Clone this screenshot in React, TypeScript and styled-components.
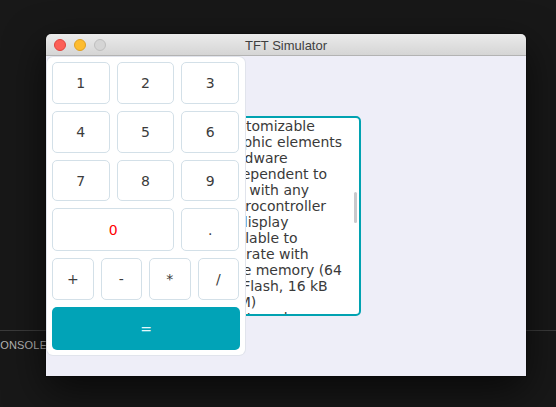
import React from "react";
import styled, { createGlobalStyle } from "styled-components";

const GlobalStyle = createGlobalStyle`
  html, body {
    margin: 0;
    padding: 0;
    background: #181818;
    overflow: hidden;
  }
  * { box-sizing: border-box; }
`;

const Desktop = styled.div`
  position: relative;
  width: 556px;
  height: 407px;
  background: #181818;
  padding-top: 330px;
  overflow: hidden;
`;

const IdePanel = styled.div`
  border-top: 1px solid #3b3b3b;
  padding-top: 8px;
  display: flex;
`;

const PanelTab = styled.span`
  margin-left: -8px;
  font-family: "Liberation Sans", Arial, sans-serif;
  font-size: 11px;
  line-height: 13px;
  color: #b4b4b4;
  letter-spacing: 0.2px;
`;

const Window = styled.div`
  position: absolute;
  left: 46px;
  top: 34px;
  width: 480px;
  display: flex;
  flex-direction: column;
  box-shadow: 0 14px 40px rgba(0, 0, 0, 0.65), 0 0 0 1px rgba(0, 0, 0, 0.25);
  border-radius: 5px 5px 0 0;
`;

const TitleBar = styled.div`
  height: 22px;
  display: grid;
  grid-template-columns: 1fr auto 1fr;
  align-items: center;
  background: linear-gradient(#ebebeb, #d5d5d5);
  border-bottom: 1px solid #b3b3b3;
  border-radius: 5px 5px 0 0;
  padding: 0 8px;
`;

const Lights = styled.div`
  display: flex;
  gap: 8px;
  align-items: center;
`;

const Light = styled.span<{ $bg: string; $border: string }>`
  width: 12px;
  height: 12px;
  border-radius: 50%;
  background: ${(p) => p.$bg};
  border: 1px solid ${(p) => p.$border};
`;

const Title = styled.span`
  font-family: "Liberation Sans", Arial, sans-serif;
  font-size: 13px;
  color: #3f3f3f;
  padding-top: 1px;
`;

const Screen = styled.div`
  position: relative;
  width: 480px;
  height: 320px;
  background: #eeeef8;
  overflow: hidden;
`;

const TextArea = styled.div`
  position: absolute;
  left: 160px;
  top: 60px;
  width: 155px;
  height: 200px;
  background: #ffffff;
  border: 2px solid #01a2b1;
  border-radius: 5px;
  padding-left: 12px;
  overflow: hidden;
  font-family: "DejaVu Sans", sans-serif;
  font-size: 14px;
  line-height: 16px;
  color: #3a3a3a;
`;

const Line = styled.div`
  white-space: pre;
`;

const Scrollbar = styled.div`
  position: absolute;
  right: 2px;
  top: 74px;
  width: 3px;
  height: 31px;
  border-radius: 2px;
  background: #c9c9cc;
`;

const Keypad = styled.div`
  position: absolute;
  left: 1px;
  top: 1px;
  width: 198px;
  height: 298px;
  background: #ffffff;
  border-radius: 6px;
  box-shadow: 0 0 0 1px #e1e4ec;
  padding: 5px 6px 5px 5px;
  display: flex;
  flex-direction: column;
  gap: 7px;
`;

const KeyRow = styled.div<{ $cols: number; $h?: number }>`
  display: grid;
  grid-template-columns: repeat(${(p) => p.$cols}, 1fr);
  gap: 7px;
  height: ${(p) => p.$h ?? 42}px;
`;

const Key = styled.div<{ $span?: number; $color?: string }>`
  grid-column: span ${(p) => p.$span ?? 1};
  display: flex;
  align-items: center;
  justify-content: center;
  background: #ffffff;
  border: 1px solid #d3e0e8;
  border-radius: 5px;
  font-family: "DejaVu Sans", sans-serif;
  font-size: 14px;
  color: ${(p) => p.$color ?? "#3c3c3c"};
`;

const EqualKey = styled.div`
  display: flex;
  align-items: center;
  justify-content: center;
  background: #01a3b7;
  border-radius: 5px;
  margin-right: -1px;
  font-family: "DejaVu Sans", sans-serif;
  font-size: 14px;
  color: #e4f8fb;
`;

const lines = [
  "Customizable",
  "graphic elements",
  "Hardware",
  "independent to",
  "use with any",
  "microcontroller",
  "or display",
  "Scalable to",
  "operate with",
  "little memory (64",
  "kB Flash, 16 kB",
  "RAM)",
  "- External",
];

export default function App() {
  return (
    <>
      <GlobalStyle />
      <Desktop>
        <IdePanel>
          <PanelTab>CONSOLE</PanelTab>
        </IdePanel>
        <Window>
          <TitleBar>
            <Lights>
              <Light $bg="#fc5f57" $border="#e0443e" />
              <Light $bg="#fdbc2f" $border="#dfa023" />
              <Light $bg="#d5d5d5" $border="#bfbfbf" />
            </Lights>
            <Title>TFT Simulator</Title>
            <span />
          </TitleBar>
          <Screen>
            <TextArea>
              {lines.map((l) => (
                <Line key={l}>{l}</Line>
              ))}
              <Scrollbar />
            </TextArea>
            <Keypad>
              <KeyRow $cols={3}>
                <Key>1</Key>
                <Key>2</Key>
                <Key>3</Key>
              </KeyRow>
              <KeyRow $cols={3}>
                <Key>4</Key>
                <Key>5</Key>
                <Key>6</Key>
              </KeyRow>
              <KeyRow $cols={3}>
                <Key>7</Key>
                <Key>8</Key>
                <Key>9</Key>
              </KeyRow>
              <KeyRow $cols={3} $h={43}>
                <Key $span={2} $color="#ff0000">0</Key>
                <Key>.</Key>
              </KeyRow>
              <KeyRow $cols={4}>
                <Key>+</Key>
                <Key>-</Key>
                <Key>*</Key>
                <Key>/</Key>
              </KeyRow>
              <KeyRow $cols={1} $h={43}>
                <EqualKey>=</EqualKey>
              </KeyRow>
            </Keypad>
          </Screen>
        </Window>
      </Desktop>
    </>
  );
}
